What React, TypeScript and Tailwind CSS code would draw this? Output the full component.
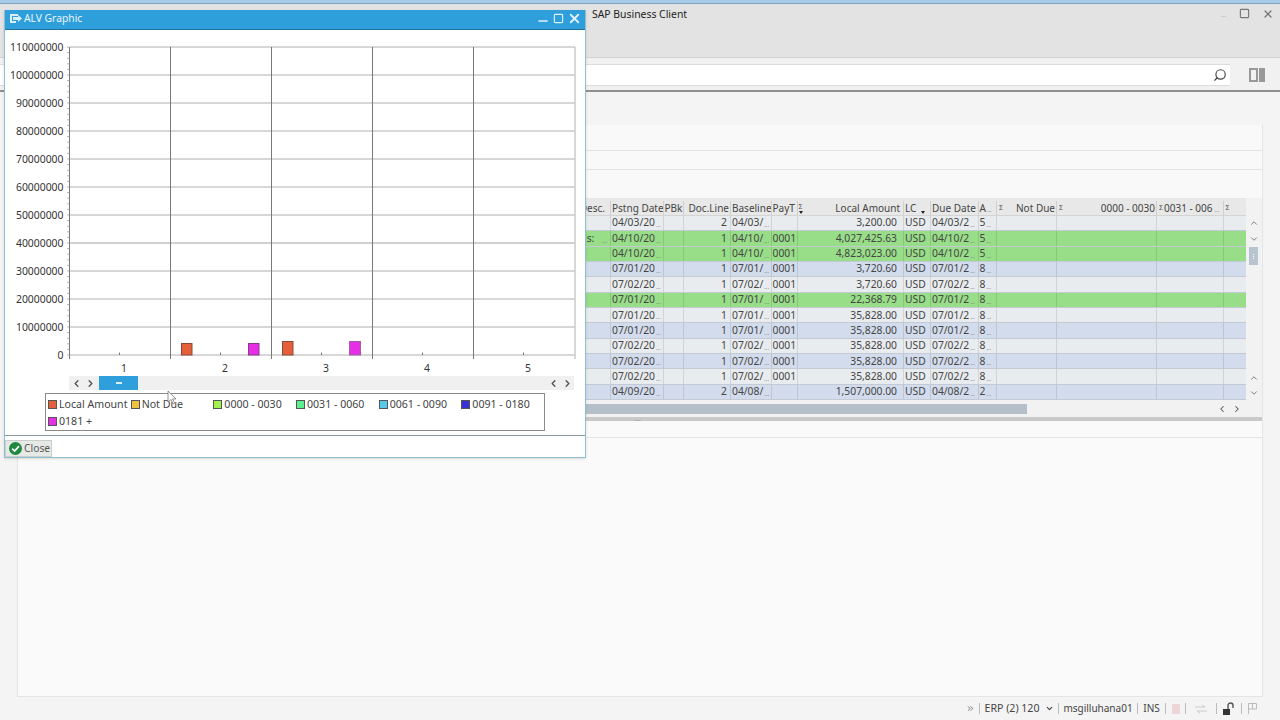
import { ChevronDown, ChevronLeft, ChevronRight, ChevronUp, ChevronsRight, Minus, Search, Square, X } from 'lucide-react'

const font = { fontFamily: '"Noto Sans", Tahoma, sans-serif' }

const columns = [41, 52.5, 20, 47.5, 40.5, 26, 106.5, 27, 47.5, 18.5, 60, 100, 66.5, 22]

type Row = {
  tone: 'grey' | 'blue' | 'green'
  desc?: string
  pstng: string
  line: string
  base: string
  payt?: string
  amount: string
  due: string
  a: string
}

const rows: Row[] = [
  { tone: 'grey', pstng: '04/03/20', line: '2', base: '04/03/', amount: '3,200.00', due: '04/03/2', a: '5' },
  { tone: 'green', desc: 'ls:', pstng: '04/10/20', line: '1', base: '04/10/', payt: '0001', amount: '4,027,425.63', due: '04/10/2', a: '5' },
  { tone: 'green', pstng: '04/10/20', line: '1', base: '04/10/', payt: '0001', amount: '4,823,023.00', due: '04/10/2', a: '5' },
  { tone: 'blue', pstng: '07/01/20', line: '1', base: '07/01/', payt: '0001', amount: '3,720.60', due: '07/01/2', a: '8' },
  { tone: 'grey', pstng: '07/02/20', line: '1', base: '07/02/', payt: '0001', amount: '3,720.60', due: '07/02/2', a: '8' },
  { tone: 'green', pstng: '07/01/20', line: '1', base: '07/01/', payt: '0001', amount: '22,368.79', due: '07/01/2', a: '8' },
  { tone: 'grey', pstng: '07/01/20', line: '1', base: '07/01/', payt: '0001', amount: '35,828.00', due: '07/01/2', a: '8' },
  { tone: 'blue', pstng: '07/01/20', line: '1', base: '07/01/', payt: '0001', amount: '35,828.00', due: '07/01/2', a: '8' },
  { tone: 'grey', pstng: '07/02/20', line: '1', base: '07/02/', payt: '0001', amount: '35,828.00', due: '07/02/2', a: '8' },
  { tone: 'blue', pstng: '07/02/20', line: '1', base: '07/02/', payt: '0001', amount: '35,828.00', due: '07/02/2', a: '8' },
  { tone: 'grey', pstng: '07/02/20', line: '1', base: '07/02/', payt: '0001', amount: '35,828.00', due: '07/02/2', a: '8' },
  { tone: 'blue', pstng: '04/09/20', line: '2', base: '04/08/', amount: '1,507,000.00', due: '04/08/2', a: '2' },
]

const toneClass = {
  grey: 'bg-[#e9ecef]',
  blue: 'bg-[#d3dced]',
  green: 'bg-[#98dd88]',
}

const legend = [
  { label: 'Local Amount', color: 'bg-[#e5603a]' },
  { label: 'Not Due', color: 'bg-[#eec23f]' },
  { label: '0000 - 0030', color: 'bg-[#a4f04e]' },
  { label: '0031 - 0060', color: 'bg-[#5cf08e]' },
  { label: '0061 - 0090', color: 'bg-[#55c8ec]' },
  { label: '0091 - 0180', color: 'bg-[#3a30d8]' },
  { label: '0181 +', color: 'bg-[#e52ee5]' },
]

const yLabels = ['110000000', '100000000', '90000000', '80000000', '70000000', '60000000', '50000000', '40000000', '30000000', '20000000', '10000000', '0']

function Dots() {
  return <span className="text-[6px] leading-none text-[#777] self-end mb-[2px] ml-px">...</span>
}

function Sigma({ sort }: { sort?: boolean }) {
  return (
    <span className="flex flex-col items-center text-[7px] leading-[8px] text-[#555]">
      Σ
      {sort && <span className="w-0 h-0 border-x-[2.5px] border-x-transparent border-t-[3px] border-t-[#222]" />}
    </span>
  )
}

function Cell({ width, className = '', children }: { width: number; className?: string; children?: React.ReactNode }) {
  return (
    <div style={{ width }} className={`shrink-0 h-full flex items-center overflow-hidden whitespace-nowrap border-r border-black/10 ${className}`}>
      {children}
    </div>
  )
}

function GridTable() {
  const w = columns
  return (
    <div className="w-fit text-[10.3px] text-[#444]">
      <div className="flex h-[18px] pt-[3px] text-[10px] bg-[#e8e8e8] border-b border-[#d4d4d4]">
        <Cell width={w[0]} className="justify-end pr-[5px]">Desc.</Cell>
        <Cell width={w[1]} className="pl-px">Pstng Date</Cell>
        <Cell width={w[2]} className="pl-px">PBk</Cell>
        <Cell width={w[3]} className="justify-end pr-px">Doc.Line</Cell>
        <Cell width={w[4]} className="pl-px">Baseline</Cell>
        <Cell width={w[5]} className="pl-px">PayT</Cell>
        <Cell width={w[6]} className="justify-between pl-px pr-[3px]"><Sigma sort />Local Amount</Cell>
        <Cell width={w[7]} className="pl-px gap-[5px]">LC <span className="w-0 h-0 mt-2 border-x-[2.5px] border-x-transparent border-t-[3px] border-t-[#222]" /></Cell>
        <Cell width={w[8]} className="pl-px">Due Date</Cell>
        <Cell width={w[9]} className="pl-px">A<Dots /></Cell>
        <Cell width={w[10]} className="pl-[2px] justify-between pr-px"><Sigma />Not Due</Cell>
        <Cell width={w[11]} className="pl-[2px] justify-between pr-px"><Sigma />0000 - 0030</Cell>
        <Cell width={w[12]} className="pl-[2px] gap-px"><Sigma />0031 - 006<Dots /></Cell>
        <Cell width={w[13]} className="pl-[2px] border-r-0"><Sigma /></Cell>
      </div>
      {rows.map((row, i) => (
        <div key={i} className={`flex h-[15.35px] border-b border-[#c3cad3] ${toneClass[row.tone]}`}>
          <Cell width={w[0]} className="pl-[14px]">{row.desc}{row.desc && <span className="ml-[7px] flex self-stretch"><Dots /></span>}</Cell>
          <Cell width={w[1]} className="pl-px">{row.pstng}<Dots /></Cell>
          <Cell width={w[2]} />
          <Cell width={w[3]} className="justify-end pr-[3px]">{row.line}</Cell>
          <Cell width={w[4]} className="pl-px">{row.base}<Dots /></Cell>
          <Cell width={w[5]} className="pl-px">{row.payt}</Cell>
          <Cell width={w[6]} className="justify-end pr-[6px]">{row.amount}</Cell>
          <Cell width={w[7]} className="pl-px">USD</Cell>
          <Cell width={w[8]} className="pl-px">{row.due}<Dots /></Cell>
          <Cell width={w[9]} className="pl-px">{row.a}<Dots /></Cell>
          <Cell width={w[10]} />
          <Cell width={w[11]} />
          <Cell width={w[12]} />
          <Cell width={w[13]} className="border-r-0" />
        </div>
      ))}
    </div>
  )
}

function Chart() {
  const xs = [170.5, 271.5, 372.5, 473.5]
  const ticks = Array.from({ length: 56 }, (_, i) => 47 + i * 5.6)
  return (
    <svg width="582" height="346" viewBox="0 30 582 346" className="block" style={font}>
      {yLabels.map((label, i) => {
        const y = 47 + i * 28
        return (
          <g key={label}>
            <line x1="70" x2="575" y1={y} y2={y} stroke={label === '40000000' ? '#8a8a8a' : '#cacaca'} strokeWidth={label === '40000000' ? 0.8 : 1.5} />
            <text x="63.5" y={y + 4} textAnchor="end" fontSize="10.4" fill="#333">{label}</text>
          </g>
        )
      })}
      <line x1="69.5" x2="69.5" y1="47" y2="359" stroke="#777" />
      {ticks.map((y) => (
        <line key={y} x1="67" x2="69.5" y1={y} y2={y} stroke="#999" strokeWidth="0.7" />
      ))}
      <line x1="575" x2="575" y1="47" y2="359" stroke="#cacaca" strokeWidth="1.5" />
      {xs.map((x) => (
        <line key={x} x1={x} x2={x} y1="47" y2="359" stroke="#777" />
      ))}
      {[1, 2, 3, 4, 5].map((n, i) => (
        <g key={n}>
          <line x1={119.5 + i * 101} x2={119.5 + i * 101} y1="355" y2="352.5" stroke="#777" />
          <text x={124 + i * 101} y="372" textAnchor="middle" fontSize="10.4" fill="#333">{n}</text>
        </g>
      ))}
      <rect x="181.5" y="343.5" width="10.5" height="11.5" fill="#e5603a" stroke="#8a4a38" />
      <rect x="248.5" y="343.5" width="10.5" height="11.5" fill="#e52ee5" stroke="#8a3a8a" />
      <rect x="282.5" y="341.5" width="10.5" height="13.5" fill="#e5603a" stroke="#8a4a38" />
      <rect x="349.5" y="341.5" width="11" height="13.5" fill="#e52ee5" stroke="#a060a0" />
    </svg>
  )
}

function AlvDialog() {
  return (
    <div style={font} className="absolute left-[4px] top-[10px] w-[582px] h-[448px] flex flex-col bg-white border border-[#8fbfcf] border-t-0 shadow-sm">
      <div className="h-[20px] shrink-0 bg-[#2f9fdc] border-b border-[#1d6f9f] flex items-center text-white text-[10.3px] pl-[4px] pr-[3px]">
        <svg width="13" height="11" viewBox="0 0 13 11" className="mr-[2px] mb-[2px]">
          <path d="M1 1h8v2H3v5h4v2H1z" fill="#d8eefa" />
          <path d="M4 4h5V2l4 3.5L9 9V7H4z" fill="#d8eefa" />
        </svg>
        <span className="opacity-90 mb-[2px]">ALV Graphic</span>
        <div className="ml-auto flex items-center gap-[2px] text-[#dff1fb] mb-[2px]">
          <Minus size={14} strokeWidth={2.5} className="mt-[5px]" />
          <Square size={11} strokeWidth={2.5} className="mx-[1px]" />
          <X size={15} strokeWidth={3} />
        </div>
      </div>
      <div className="flex-1 flex flex-col border-b border-[#8a9a9f] relative overflow-hidden">
        <div className="-ml-[5px]">
          <Chart />
        </div>
        <div className="ml-[64px] w-[505px] h-[14px] shrink-0 bg-[#f0f0f0] flex items-center text-[#555]">
          <ChevronLeft size={11} strokeWidth={3} className="ml-[2px]" />
          <ChevronRight size={11} strokeWidth={3} className="ml-[3px]" />
          <div className="ml-[3px] w-[39px] h-full bg-[#2f9fdc] flex items-center justify-center">
            <span className="w-[6px] h-[2px] bg-[#d8eefa]" />
          </div>
          <ChevronLeft size={11} strokeWidth={3} className="ml-auto mr-[3px]" />
          <ChevronRight size={11} strokeWidth={3} className="mr-px" />
        </div>
        <div className="ml-[40px] mt-[3px] w-[500px] h-[38px] shrink-0 border border-[#8a8a8a] pl-[2px] pt-[2px] grid grid-cols-6 auto-rows-[17px] text-[10.6px] text-[#444]">
          {legend.map((item) => (
            <div key={item.label} className="flex items-center gap-[2px] whitespace-nowrap">
              <span className={`w-[9px] h-[9px] border border-[#555] ${item.color}`} />
              {item.label}
            </div>
          ))}
        </div>
      </div>
      <div className="h-[21px] shrink-0 flex items-end">
        <button className="h-[17px] w-[47px] bg-[#e6e9e6] border border-[#c9cfc9] flex items-center pl-[3px] gap-[2px] text-[10.3px] text-[#555]">
          <svg width="13" height="13" viewBox="0 0 12 12">
            <circle cx="6" cy="6" r="6" fill="#1f8a3f" />
            <path d="M3 6.2l2.2 2.2L9.2 3.8" fill="none" stroke="#fff" strokeWidth="1.6" />
          </svg>
          Close
        </button>
      </div>
      <svg width="12" height="16" viewBox="0 0 12 16" className="absolute left-[162px] top-[380px]">
        <path d="M1 1v11l3-2.5 2 4.5 1.6-.8-2-4.3H9z" fill="#fff" stroke="#777" strokeWidth="0.8" />
      </svg>
    </div>
  )
}

function Segment({ width, children }: { width: number; children?: React.ReactNode }) {
  return (
    <div style={{ width }} className="shrink-0 flex items-center justify-center gap-[5px] border-l border-[#bbb] h-[11px]">
      {children}
    </div>
  )
}

function StatusBar() {
  return (
    <div className="h-[23px] shrink-0 flex items-center justify-end pr-[18px] text-[#444]">
      <ChevronsRight size={9} className="text-[#555] mr-[4px]" />
      <Segment width={79}>
        <span className="text-[10.6px]">ERP (2) 120</span>
        <ChevronDown size={9} strokeWidth={3} />
      </Segment>
      <Segment width={79}>
        <span className="text-[10px]">msgilluhana01</span>
      </Segment>
      <Segment width={28}>
        <span className="text-[10px]">INS</span>
      </Segment>
      <Segment width={20}>
        <span className="w-[8px] h-[10px] bg-[#efd5d8]" />
      </Segment>
      <Segment width={31}>
        <svg width="14" height="10" viewBox="0 0 14 10">
          <path d="M1 3h10M8 1l3 2M13 7H3M6 9L3 7" stroke="#ccc" fill="none" />
        </svg>
      </Segment>
      <Segment width={25}>
        <svg width="14" height="14" viewBox="0 0 14 14">
          <rect x="1" y="7" width="7" height="6" fill="#333" />
          <path d="M6 7V3.5a2.5 2.5 0 0 1 5 0V6" stroke="#555" strokeWidth="1.4" fill="none" />
        </svg>
      </Segment>
      <Segment width={21}>
        <svg width="13" height="13" viewBox="0 0 13 13" fill="none" stroke="#bbb">
          <path d="M2.5 12V1.5h8V7h-8M6.5 1.5V7" />
        </svg>
      </Segment>
    </div>
  )
}

export default function App() {
  return (
    <div style={font} className="relative w-[1280px] h-[720px] overflow-hidden bg-[#f4f4f4] flex flex-col">
      <div className="h-[4px] shrink-0 bg-[#a6cbe6] border-b border-[#7fa3c0]" />
      <div className="h-[54px] shrink-0 bg-[#e3e3e3] border-b border-[#d2d2d2] relative">
        <div className="pl-[592px] pt-[3px] text-[10.4px] text-[#222]">SAP Business Client</div>
        <div className="absolute right-[6px] top-[3px] flex items-center gap-[12px] text-[#777]">
          <Minus size={7} className="mt-[6px] text-[#bbb]" />
          <Square size={11} strokeWidth={2.5} />
          <X size={12} strokeWidth={2.5} />
        </div>
      </div>
      <div className="h-[34px] shrink-0 bg-[#f1f1f1] border-b-2 border-[#8f8f8f] flex items-center">
        <div className="w-[1230px] h-[22px] mt-px bg-white border-y border-[#dcdcdc] flex items-center justify-end pr-[3px]">
          <Search size={14} strokeWidth={2} className="text-[#444] -scale-x-100" />
        </div>
        <div className="ml-[19px] mt-[2px] flex gap-[1px]">
          <span className="w-[9px] h-[14px] border-2 border-[#999]" />
          <span className="w-[6px] h-[14px] bg-[#999]" />
        </div>
      </div>
      <div className="flex-1 flex flex-col px-[17px] min-h-0">
        <div className="h-[33px] shrink-0" />
        <div className="flex-1 min-h-0 bg-[#fafafa] border-x border-b border-[#e4e4e4] flex flex-col">
          <div className="h-[26px] shrink-0 bg-[#f9f9f9] border-b border-[#e2e2e2]" />
          <div className="h-[19px] shrink-0 bg-[#f9f9f9] border-b border-[#e2e2e2]" />
          <div className="h-[28px] shrink-0 bg-[#f9f9f9]" />
          <div className="h-[202px] shrink-0 bg-[#f2f2f2] flex pl-[552px]">
            <GridTable />
            <div className="flex-1 flex flex-col items-center text-[#666] pt-[20px] pb-[2px]">
              <ChevronUp size={10} strokeWidth={2} />
              <ChevronDown size={10} strokeWidth={2} className="mt-[6px]" />
              <span className="w-[9px] h-[18px] mt-[3px] bg-[#b8c4d0] flex flex-col items-center justify-center gap-px">
                <span className="w-px h-px bg-white" />
                <span className="w-px h-px bg-white" />
                <span className="w-px h-px bg-white" />
              </span>
              <ChevronUp size={10} strokeWidth={2} className="mt-auto" />
              <ChevronDown size={10} strokeWidth={2} className="mt-[5px]" />
            </div>
          </div>
          <div className="h-[17px] shrink-0 bg-[#f2f2f2] flex items-center">
            <div className="ml-[552px] w-[457px] h-[10px] bg-[#b5bfc9]" />
            <ChevronLeft size={10} strokeWidth={2.5} className="ml-[190px] text-[#555]" />
            <ChevronRight size={10} strokeWidth={2.5} className="ml-[5px] text-[#555]" />
          </div>
          <div className="h-[4px] shrink-0 bg-[#c9c9c9] relative">
            <span className="absolute left-[616px] top-0 text-[5px] leading-[4px] text-[#777]">.....</span>
          </div>
          <div className="h-[17px] shrink-0 bg-[#fafafa] border-b border-[#e4e4e4]" />
          <div className="flex-1" />
        </div>
      </div>
      <StatusBar />
      <AlvDialog />
    </div>
  )
}
